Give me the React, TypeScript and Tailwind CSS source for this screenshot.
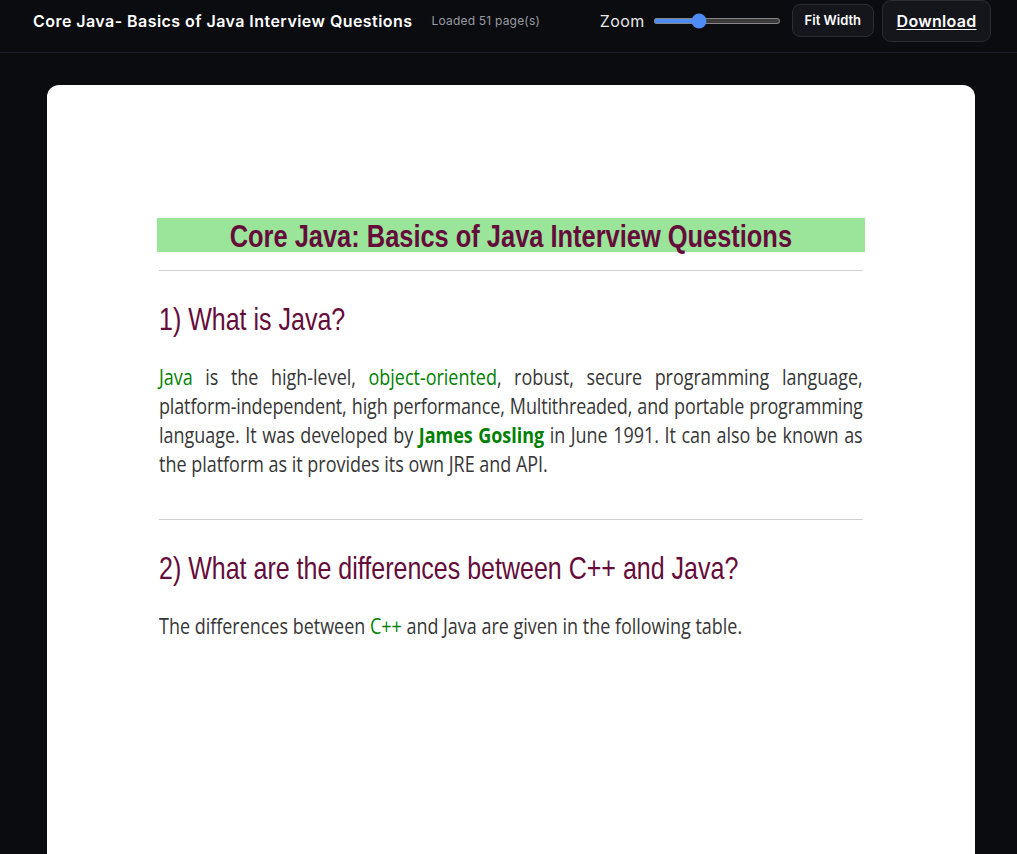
import { useState } from "react";

const arial = { fontFamily: '"Liberation Sans", Arial, sans-serif' };
const body = { fontFamily: '"Open Sans", "Noto Sans", sans-serif' };

function Header() {
  const [zoom, setZoom] = useState(34);
  return (
    <header className="h-[53px] border-b border-[#1c1d26] bg-[#0b0c10] text-white" style={{ fontFamily: 'Inter, "Noto Sans", sans-serif' }}>
      <div className="flex h-[41px] items-center">
        <h1 className="ml-[33px] text-[16px] font-semibold tracking-[0.45px]">Core Java- Basics of Java Interview Questions</h1>
        <span className="ml-[19px] text-[12px] tracking-[0.2px] text-[#9a9ba3]">Loaded 51 page(s)</span>
        <div className="ml-auto flex items-center">
          <span className="text-[16px] tracking-[0.4px] text-[#e8e8ea]">Zoom</span>
          <input
            type="range"
            min={0}
            max={100}
            value={zoom}
            onChange={(e) => setZoom(Number(e.target.value))}
            className="ml-[8px] h-[6px] w-[128px] accent-[#4f8bf5]"
          />
          <button className="ml-[11px] h-[33px] rounded-[8px] border border-[#2b2c34] bg-[#15161c] px-[12px] text-[13px] font-semibold">
            Fit Width
          </button>
          <button className="mr-[26px] ml-[8px] h-[42px] rounded-[9px] border border-[#2b2c34] bg-[#15161c] px-[13.5px] text-[16px] font-semibold tracking-[0.3px] underline underline-offset-2">
            Download
          </button>
        </div>
      </div>
    </header>
  );
}

export default function App() {
  return (
    <div className="min-h-[854px] bg-[#0b0c10]">
      <Header />
      <main className="pt-[32px]">
        <div className="ml-[47px] h-[800px] w-[928px] overflow-hidden rounded-t-[12px] bg-white pt-[133px] pl-[110px] pr-[110px]">
          <div className="flex h-[34px] items-center justify-center bg-[#9be59b] pt-[4px]">
            <span className="inline-block scale-x-[0.82] text-[31px] leading-[34px] font-bold whitespace-nowrap text-[#650c3b]" style={arial}>
              Core Java: Basics of Java Interview Questions
            </span>
          </div>
          <div className="mx-[2px] mt-[18px] border-t border-[#d0d0d0]" />
          <div className="px-[2px]">
            <h2 className="mt-[30px] origin-left scale-x-[0.82] text-[30.5px] leading-[36px] whitespace-nowrap text-[#650c3b]" style={arial}>
              1) What is Java?
            </h2>
            {/* pdf text lines, kept as rendered */}
            <div className="mt-[26px] w-[823px] origin-left scale-x-[0.855] text-[21px] leading-[29px] text-[#363636]" style={body}>
              <p className="text-justify [text-align-last:justify]">
                <span className="text-[#008000]">Java</span> is the high-level, <span className="text-[#008000]">object-oriented</span>, robust, secure programming language,
              </p>
              <p className="text-justify tracking-[-0.15px] whitespace-nowrap [text-align-last:justify]">
                platform-independent, high performance, Multithreaded, and portable programming
              </p>
              <p className="text-justify [text-align-last:justify]">
                language. It was developed by <b className="text-[#008000]">James Gosling</b> in June 1991. It can also be known as
              </p>
              <p>the platform as it provides its own JRE and API.</p>
            </div>
            <div className="mt-[40px] border-t border-[#d0d0d0]" />
            <h2 className="mt-[30px] origin-left scale-x-[0.82] text-[30.5px] leading-[36px] whitespace-nowrap text-[#650c3b]" style={arial}>
              2) What are the differences between C++ and Java?
            </h2>
            <p className="mt-[26px] w-[823px] origin-left scale-x-[0.855] text-[21px] leading-[29px] text-[#363636]" style={body}>
              The differences between <span className="text-[#008000]">C++</span> and Java are given in the following table.
            </p>
          </div>
        </div>
      </main>
    </div>
  );
}
